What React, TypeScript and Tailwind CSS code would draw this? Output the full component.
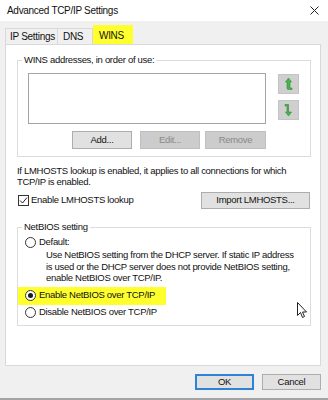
import type { ReactNode } from 'react';

const font = "font-['Liberation_Sans',Arial,sans-serif]";

function WinButton({ children, width, disabled, focused }: { children: ReactNode; width: string; disabled?: boolean; focused?: boolean }) {
  const base = 'flex items-center justify-center h-full shrink-0';
  if (disabled) {
    return <div className={`${base} ${width} bg-[#cccccc] border border-[#bfbfbf] text-[#8a8a8a]`}>{children}</div>;
  }
  if (focused) {
    return <div className={`${base} ${width} bg-[#e1e1e1] border-2 border-[#2f83d4]`}>{children}</div>;
  }
  return <div className={`${base} ${width} bg-[#e1e1e1] border border-[#adadad]`}>{children}</div>;
}

function Radio({ checked }: { checked?: boolean }) {
  return (
    <span className="w-[11px] h-[11px] rounded-full border border-[#333333] bg-white flex items-center justify-center shrink-0">
      {checked && <span className="w-[5px] h-[5px] rounded-full bg-[#1a1a1a]" />}
    </span>
  );
}

function ArrowButton({ down }: { down?: boolean }) {
  return (
    <div className="w-[21px] h-[20px] bg-[#cfcfcf] border border-[#c4c4c4] flex items-center justify-center">
      <svg width="9" height="14" viewBox="0 0 9 14">
        {down ? (
          <path d="M1 1.5 H4.5 V9 H7.5 L4.5 13 L1.5 9 H3 V3 H1 Z" fill="#49b54d" stroke="#2f8a33" strokeWidth="0.6" strokeLinejoin="round" />
        ) : (
          <path d="M4.5 1 L7.5 5 H6 V11 H8 V12.5 H4.5 A1.5 1.5 0 0 1 3 11 V5 H1.5 Z" fill="#49b54d" stroke="#2f8a33" strokeWidth="0.6" strokeLinejoin="round" />
        )}
      </svg>
    </div>
  );
}

function GroupBox({ label, className, children }: { label: string; className: string; children: ReactNode }) {
  return (
    <div className={`relative border border-[#dcdcdc] ${className}`}>
      <span className="absolute -top-[7px] left-[4px] bg-white px-[2px] leading-[12px]">{label}</span>
      {children}
    </div>
  );
}

export default function App() {
  return (
    <div className={`relative w-[328px] h-[400px] overflow-hidden bg-[#f0f0f0] flex flex-col border-b-[2px] border-[#a3a3a3] text-[9.5px] tracking-[-0.3px] text-[#111] ${font}`}>
      {/* title bar */}
      <div className="h-[21px] bg-white flex items-center justify-between pl-[7px] pr-[9px] shrink-0">
        <span className="text-[10px] tracking-[-0.3px] text-[#111]">Advanced TCP/IP Settings</span>
        <svg width="9" height="9" viewBox="0 0 9 9">
          <path d="M0.5 0.5 L8.5 8.5 M8.5 0.5 L0.5 8.5" stroke="#222" strokeWidth="1" />
        </svg>
      </div>

      {/* tabs */}
      <div className="flex items-end pl-[5px] h-[23px] shrink-0 text-[10px]">
        <div className="h-[16px] w-[53px] border border-b-0 border-[#d9d9d9] bg-[#f0f0f0] flex items-center pl-[4px]">IP Settings</div>
        <div className="h-[16px] w-[35px] border border-b-0 border-l-0 border-[#d9d9d9] bg-[#f0f0f0] flex items-center pl-[5px]">DNS</div>
        <div className="h-[19px] w-[40px] bg-[#ffff2e] flex items-center pl-[6px] pt-[1px]">WINS</div>
      </div>

      {/* tab page */}
      <div className="ml-[5px] w-[316px] h-[322px] shrink-0 bg-white border border-[#d9d9d9] pl-[11px] pt-[15px] flex flex-col">
        <GroupBox label="WINS addresses, in order of use:" className="w-[294px] h-[97px] pl-[10px] pt-[12px]">
          <div className="flex">
            <div className="w-[238px] h-[51px] border border-[#a5a5a5] bg-white" />
            <div className="ml-[12px] mt-[1px] flex flex-col gap-[6px]">
              <ArrowButton />
              <ArrowButton down />
            </div>
          </div>
          <div className="flex w-[238px] justify-end h-[18px] mt-[7px]">
            <div className="mr-[8px] flex h-full"><WinButton width="w-[60px]">Add...</WinButton></div>
            <div className="mr-[5px] flex h-full"><WinButton width="w-[60px]" disabled>Edit...</WinButton></div>
            <WinButton width="w-[61px]" disabled>Remove</WinButton>
          </div>
        </GroupBox>

        <p className="mt-[8px] leading-[11px]">
          If LMHOSTS lookup is enabled, it applies to all connections for which
          <br />
          TCP/IP is enabled.
        </p>

        <div className="mt-[5px] w-[293px] h-[17px] flex items-center justify-between">
          <div className="flex items-center gap-[2px] pl-[1px]">
            <span className="w-[11px] h-[11px] border border-[#333333] bg-white flex items-center justify-center">
              <svg width="9" height="9" viewBox="0 0 9 9">
                <path d="M1 4.5 L3.5 7 L8 1.5" fill="none" stroke="#222" strokeWidth="1" />
              </svg>
            </span>
            <span>Enable LMHOSTS lookup</span>
          </div>
          <WinButton width="w-[109px]">Import LMHOSTS...</WinButton>
        </div>

        <GroupBox label="NetBIOS setting" className="mt-[18px] w-[294px] h-[99px] pl-[7px] pt-[8px] flex flex-col">
          <div className="h-[12px] flex items-center gap-[3px]">
            <Radio />
            <span>Default:</span>
          </div>
          <p className="pl-[21px] mt-[1px] leading-[11.5px]">
            Use NetBIOS setting from the DHCP server. If static IP address
            <br />
            is used or the DHCP server does not provide NetBIOS setting,
            <br />
            enable NetBIOS over TCP/IP.
          </p>
          <div className="-ml-[7px] pl-[7px] mt-[3px] w-[148px] h-[18px] bg-[#ffff2e] flex items-center gap-[3px]">
            <Radio checked />
            <span>Enable NetBIOS over TCP/IP</span>
          </div>
          <div className="h-[16px] flex items-center gap-[3px]">
            <Radio />
            <span>Disable NetBIOS over TCP/IP</span>
          </div>
        </GroupBox>
      </div>

      {/* footer */}
      <div className="mt-[8px] h-[16px] flex justify-end gap-[8px] pr-[7px]">
        <WinButton width="w-[59px]" focused>OK</WinButton>
        <WinButton width="w-[59px]">Cancel</WinButton>
      </div>

      {/* mouse pointer */}
      <svg className="absolute left-[297px] top-[302px]" width="11" height="17" viewBox="0 0 11 17">
        <path d="M0.5 0.5 V13.5 L3.5 10.5 L5.5 15.5 L7.5 14.5 L5.5 10 H9.5 Z" fill="white" stroke="#222" strokeWidth="1" strokeLinejoin="round" />
      </svg>
    </div>
  );
}
